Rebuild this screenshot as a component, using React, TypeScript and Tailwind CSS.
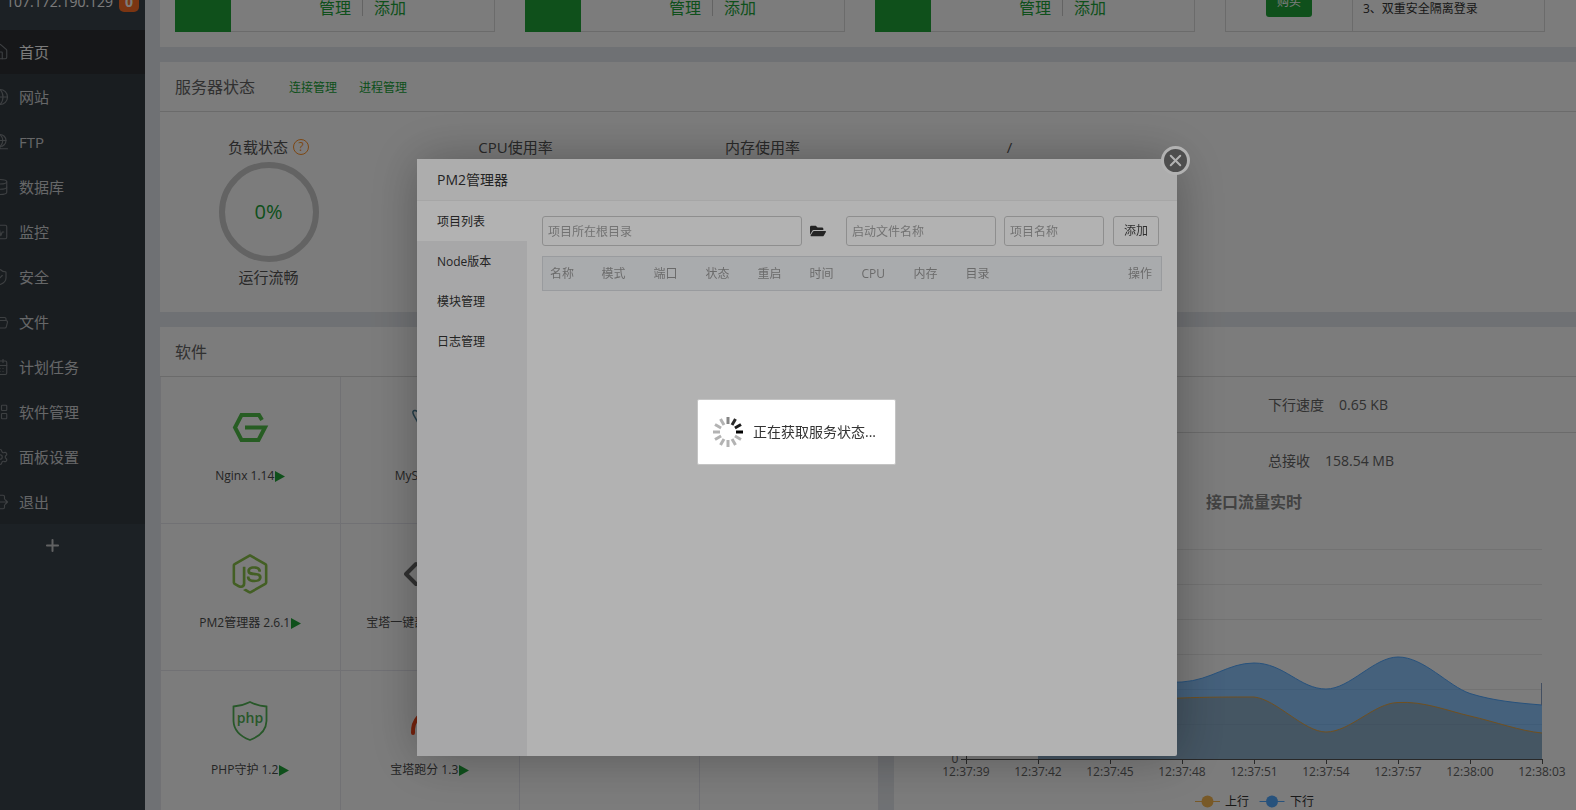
import React from "react";
import {
    CalendarDays,
    Database,
    FolderOpen,
    Globe,
    House,
    LayoutGrid,
    Plus,
    Settings,
    ShieldCheck,
    SquareActivity,
    X,
} from "lucide-react";
import { FaFolderOpen, FaNodeJs } from "react-icons/fa";

interface IconProps {
    size?: number;
    strokeWidth?: number;
    className?: string;
}

interface MenuItem {
    label: string;
    icon: React.ComponentType<IconProps>;
}

const FtpIcon: React.FC<IconProps> = ({ size = 18, strokeWidth = 1.5, className }) => (
    <svg viewBox="0 0 24 24" width={size} height={size} className={className} fill="none" stroke="currentColor" strokeWidth={strokeWidth} strokeLinecap="round">
        <circle cx="12" cy="10" r="8" />
        <path d="M12 2c-5 5-5 11 0 16M12 2c5 5 5 11 0 16M4 10h16M12 18v3M2 21h20" />
    </svg>
);

const ExitIcon: React.FC<IconProps> = ({ size = 18, strokeWidth = 1.5, className }) => (
    <svg viewBox="0 0 24 24" width={size} height={size} className={className} fill="none" stroke="currentColor" strokeWidth={strokeWidth} strokeLinecap="round" strokeLinejoin="round">
        <path d="M18 8V5a2 2 0 0 0-2-2H5a2 2 0 0 0-2 2v14a2 2 0 0 0 2 2h11a2 2 0 0 0 2-2v-3M10 12h12M19 9l3 3-3 3" />
    </svg>
);

const menu: MenuItem[] = [
    { label: "首页", icon: House },
    { label: "网站", icon: Globe },
    { label: "FTP", icon: FtpIcon },
    { label: "数据库", icon: Database },
    { label: "监控", icon: SquareActivity },
    { label: "安全", icon: ShieldCheck },
    { label: "文件", icon: FolderOpen },
    { label: "计划任务", icon: CalendarDays },
    { label: "软件管理", icon: LayoutGrid },
    { label: "面板设置", icon: Settings },
    { label: "退出", icon: ExitIcon },
];

const Sidebar: React.FC = () => (
    <aside className="w-[145px] shrink-0 overflow-hidden bg-[#3c454c]">
        <div className="flex h-[30px] items-end gap-[6px] overflow-hidden pb-[18px] pl-[6px] text-sm leading-5 text-white">
            <span>107.172.190.129</span>
            <span className="w-5 rounded-[5px] bg-[#fc6d26] text-center font-bold">0</span>
        </div>
        <nav className="flex flex-col gap-px bg-[#353d44]">
            {menu.map(({ label, icon: Icon }, idx) => (
                <a
                    key={label}
                    href="#"
                    className={
                        idx === 0
                            ? "flex h-11 items-center bg-[#2f3136] text-[15px] text-white"
                            : "flex h-11 items-center text-[15px] text-[#d2d4d6]"
                    }
                >
                    <Icon size={18} strokeWidth={1.5} className="-ml-[9px] mr-[10px] shrink-0 text-[#7f8488]" />
                    {label}
                </a>
            ))}
        </nav>
        <button type="button" aria-label="添加菜单" className="flex h-[42px] w-full items-center pl-[43px] text-[#c9cbcd]">
            <Plus size={19} strokeWidth={2.5} />
        </button>
    </aside>
);

const SiteBox: React.FC = () => (
    <div className="flex h-full border-b border-r border-[#ddd]">
        <div className="-mb-px w-14 bg-[#20a53a]" />
        <div className="flex flex-1 items-end justify-center gap-[11px] pb-[13px] text-base leading-5 text-[#20a53a]">
            <a href="#">管理</a>
            <span className="mb-[2px] h-4 w-px bg-[#ccc]" />
            <a href="#">添加</a>
        </div>
    </div>
);

const Overview: React.FC = () => (
    <section className="h-[47px] shrink-0 overflow-hidden bg-white pl-[15px] pr-[31px]">
        <div className="grid h-8 grid-cols-4 grid-rows-1 gap-[30px]">
            <SiteBox />
            <SiteBox />
            <SiteBox />
            <div className="flex h-full border border-t-0 border-[#ddd]">
                <div className="flex w-[127px] items-end justify-center border-r border-[#ddd] pb-[14px]">
                    <button type="button" className="h-[30px] w-[46px] rounded-[3px] bg-[#20a53a] text-xs text-white">
                        购买
                    </button>
                </div>
                <p className="self-end pb-3 pl-[10px] text-xs leading-5 text-[#333]">3、双重安全隔离登录</p>
            </div>
        </div>
    </section>
);

const ServerStatus: React.FC = () => (
    <section className="h-[250px] shrink-0 bg-white">
        <header className="flex h-[50px] items-center border-b border-[#ddd] pl-[15px]">
            <h2 className="text-base text-[#666]">服务器状态</h2>
            <a href="#" className="ml-[34px] pt-[2px] text-xs text-[#20a53a]">连接管理</a>
            <a href="#" className="ml-[22px] pt-[2px] text-xs text-[#20a53a]">进程管理</a>
        </header>
        <div className="-ml-[15px] flex pt-[25px] text-center text-[15px] leading-5 text-[#555]">
            <div className="flex w-[247px] flex-col items-center">
                <div className="flex items-center gap-[5px]">
                    负载状态
                    <a href="#" className="flex size-4 items-center justify-center rounded-full border border-[#ff9228] text-xs leading-4 text-[#ff9228]">?</a>
                </div>
                <div className="mt-[5px] flex size-[100px] items-center justify-center rounded-full border-[6px] border-[#ccc] text-xl text-[#20a53a]">
                    0%
                </div>
                <div className="mt-[5px]">运行流畅</div>
            </div>
            <div className="w-[247px]">CPU使用率</div>
            <div className="w-[247px]">内存使用率</div>
            <div className="w-[247px]">/</div>
        </div>
    </section>
);

const NginxIcon = () => (
    <svg viewBox="0 0 40 40" className="size-10" fill="none" stroke="#52c04a" strokeWidth="4">
        <path d="M32 13 29 8H11.5L5 20.500l6.500 12.500h17L35 20.500H15" />
    </svg>
);

const MysqlIcon = () => (
    <svg viewBox="0 0 40 40" className="size-10" fill="none" stroke="#4a7f96" strokeWidth="1.500">
        <path d="M8 16C6 11 2 7 3 4.500C4 3 6 3 9 6c7 1 14 8 17 16 2 4 6 6 9 8" />
    </svg>
);

const DeployIcon = () => (
    <svg viewBox="0 0 52 40" className="h-10 w-[52px]" fill="none" stroke="#666" strokeWidth="4" strokeLinecap="round" strokeLinejoin="round">
        <path d="M12 10 2 20l10 10M40 10l10 10-10 10M30 6l-8 28" />
    </svg>
);

const PhpIcon = () => (
    <svg viewBox="0 0 40 40" className="size-10">
        <path d="M20 1Q12 5 3.500 5.500V20Q4 33 20 39Q36 33 36.500 20V5.500Q28 5 20 1Z" fill="none" stroke="#53b557" strokeWidth="1.800" />
        <text x="20" y="22" textAnchor="middle" fontSize="14" fontWeight="600" fill="#53b557">php</text>
    </svg>
);

const ScoreIcon = () => (
    <svg viewBox="0 0 40 40" className="size-10" fill="none" stroke="#f2461a" strokeWidth="4" strokeLinecap="round">
        <path d="M3 32C2 4 38 4 37 32M20 28l7-9" />
    </svg>
);

interface Soft {
    name: string;
    icon: React.ReactNode;
}

const softs: (Soft | null)[] = [
    { name: "Nginx 1.14", icon: <NginxIcon /> },
    { name: "MySQL 5.6", icon: <MysqlIcon /> },
    null,
    null,
    { name: "PM2管理器 2.6.1", icon: <FaNodeJs className="size-10 text-[#8cc34b]" /> },
    { name: "宝塔一键部署源码 1.1", icon: <DeployIcon /> },
    null,
    null,
    { name: "PHP守护 1.2", icon: <PhpIcon /> },
    { name: "宝塔跑分 1.3", icon: <ScoreIcon /> },
    null,
    null,
];

const Software: React.FC = () => (
    <section className="min-w-0 flex-[719] bg-white">
        <header className="flex h-[50px] items-center border-b border-[#ddd] pl-[15px]">
            <h2 className="text-base text-[#666]">软件</h2>
        </header>
        <div className="grid grid-cols-4 border-l border-[#e8e8f0]">
            {softs.map((s, idx) => (
                <div key={idx} className="flex h-[147px] flex-col items-center border-b border-r border-[#e8e8f0] pt-[30px]">
                    {s && (
                        <>
                            {s.icon}
                            <div className="mt-[19px] flex items-center gap-px whitespace-nowrap text-xs leading-5 text-[#4d4d4d]">
                                {s.name}
                                <svg viewBox="0 0 10 11" className="h-[11px] w-[10px]" fill="#20a53a">
                                    <path d="M0 0 10 5.500 0 11Z" />
                                </svg>
                            </div>
                        </>
                    )}
                </div>
            ))}
        </div>
    </section>
);

const ticks = ["12:37:39", "12:37:42", "12:37:45", "12:37:48", "12:37:51", "12:37:54", "12:37:57", "12:38:00", "12:38:03"];
const gridLines = [60, 95, 130, 165, 200, 235];

const downLine = "M144 235C180 215 240 193 288 193C318 191 334 174 360 174C390 174 406 200 432 200C456 200 480 168 504 168C530 168 554 197 576 204.500C600 212 624 214 648 216";
const upLine = "M144 250C190 240 240 209 288 209C310 208 340 208 360 208C382 210 410 243 432 243C456 243 480 214 504 213.500C530 212 554 222 576 227C602 233 626 242 648 244";

const TrafficChart: React.FC = () => (
    <svg viewBox="0 0 682 321" className="block h-auto w-full" fontSize="12">
        <text x="360" y="19" textAnchor="middle" fontSize="16" fontWeight="bold" fill="#888">接口流量实时</text>
        {gridLines.map((y) => (
            <path key={y} d={`M72 ${y + 0.5}H648`} stroke="#ebebeb" />
        ))}
        <path d={`${upLine}V270H144Z`} fill="#ff8c00" fillOpacity="0.4" />
        <path d={`${downLine}V270H144Z`} fill="#1e90ff" fillOpacity="0.5" />
        <path d={downLine} fill="none" stroke="#52a9ff" />
        <path d={upLine} fill="none" stroke="#e5a543" />
        <path d="M647.500 194V216" stroke="#8aa4c8" />
        <path d="M67 270.500H648M72.500 60V275" stroke="#555" />
        <text x="61" y="274" textAnchor="middle" fill="#666">0</text>
        {ticks.map((t, idx) => (
            <g key={t}>
                <path d={`M${72.5 + idx * 72} 270V275`} stroke="#555" />
                <text x={72 + idx * 72} y="287" textAnchor="middle" fill="#666">{t}</text>
            </g>
        ))}
        <path d="M301 312.500H326" stroke="#f7b851" />
        <circle cx="313.500" cy="312.500" r="6" fill="#f7b851" />
        <text x="331" y="317" fill="#333">上行</text>
        <path d="M365.500 312.500H390.500" stroke="#52a9ff" />
        <circle cx="378" cy="312.500" r="6" fill="#52a9ff" />
        <text x="396" y="317" fill="#333">下行</text>
    </svg>
);

const Traffic: React.FC = () => (
    <section className="min-w-0 flex-[682] bg-white text-sm text-[#666]">
        <header className="h-[50px] border-b border-[#ddd]" />
        <dl className="flex h-14 items-center gap-[15px] border-b border-[#ddd] pl-[374px]">
            <dt>下行速度</dt>
            <dd>0.65 KB</dd>
        </dl>
        <dl className="flex h-14 items-center gap-[15px] pl-[374px]">
            <dt>总接收</dt>
            <dd>158.54 MB</dd>
        </dl>
        <TrafficChart />
    </section>
);

const tabs = ["项目列表", "Node版本", "模块管理", "日志管理"];
const columns = ["名称", "模式", "端口", "状态", "重启", "时间", "CPU", "内存", "目录"];

const fieldClass = "h-[30px] rounded-[3px] border border-[#ccc] px-[5px] text-xs text-[#333] placeholder:text-[#a5a5a5]";

const Pm2Dialog: React.FC = () => (
    <div role="dialog" aria-label="PM2管理器" className="relative flex h-[597px] w-[760px] flex-col rounded-[2px] bg-white shadow-[1px_1px_50px_rgba(0,0,0,0.3)]">
        <h2 className="h-[42px] border-b border-[#eee] bg-[#f8f8f8] pl-5 text-sm leading-[41px] text-[#333]">PM2管理器</h2>
        <button type="button" aria-label="关闭" className="absolute -right-[13px] -top-[13px] flex size-[29px] items-center justify-center rounded-full border-[3px] border-white bg-[#707070] text-white">
            <X size={19} strokeWidth={2.5} className="shrink-0" />
        </button>
        <div className="flex flex-1">
            <div className="flex w-[110px] flex-col bg-[#f0f0f1]">
                {tabs.map((t, idx) => (
                    <button
                        key={t}
                        type="button"
                        className={
                            idx === 0
                                ? "h-10 bg-white pl-5 pt-[2px] text-left text-xs text-[#333]"
                                : "h-10 pl-5 pt-[2px] text-left text-xs text-[#333]"
                        }
                    >
                        {t}
                    </button>
                ))}
            </div>
            <div className="flex-1 p-[15px]">
                <form className="flex items-center">
                    <input aria-label="项目所在根目录" placeholder="项目所在根目录" className={`${fieldClass} w-[260px]`} />
                    <button type="button" aria-label="选择目录" className="ml-2 w-9 text-[#333]">
                        <FaFolderOpen size={16} />
                    </button>
                    <input aria-label="启动文件名称" placeholder="启动文件名称" className={`${fieldClass} w-[150px]`} />
                    <input aria-label="项目名称" placeholder="项目名称" className={`${fieldClass} ml-2 w-[100px]`} />
                    <button type="button" className="ml-[9px] h-[30px] w-[46px] rounded-[3px] border border-[#ccc] text-xs text-[#444]">
                        添加
                    </button>
                </form>
                <table className="mt-[10px] w-full table-fixed border border-[#dbdee2] text-left text-xs text-[#999]">
                    <thead>
                        <tr className="h-[34px] bg-[#f3f5f8]">
                            {columns.map((c) => (
                                <th key={c} className="w-[52px] pl-[7px] font-normal">{c}</th>
                            ))}
                            <th className="pr-[9px] text-right font-normal">操作</th>
                        </tr>
                    </thead>
                </table>
            </div>
        </div>
    </div>
);

const spokes = [
    "#000", "#b3b3b3", "#b3b3b3", "#b3b3b3", "#b3b3b3", "#b3b3b3",
    "#b3b3b3", "#b3b3b3", "#b3b3b3", "#858585", "#2b2b2b", "#1a1a1a",
];

const Loading: React.FC = () => (
    <div role="status" className="flex h-[66px] w-[199px] items-center gap-[10px] rounded-[2px] border border-[#c4c4c4] bg-white pl-[15px] text-sm text-[#333]">
        <svg viewBox="-15 -15 30 30" className="size-[30px]" strokeWidth="3">
            {spokes.map((color, idx) => (
                <path key={idx} d="M8 0H15" stroke={color} transform={`rotate(${idx * 30})`} />
            ))}
        </svg>
        正在获取服务状态...
    </div>
);

const App: React.FC = () => (
    <div className="flex h-screen overflow-hidden bg-[#e6e9ee] font-['Open_Sans','Noto_Sans_CJK_SC',sans-serif]">
        <Sidebar />
        <main className="ml-[15px] flex min-w-0 flex-1 flex-col gap-[15px]">
            <Overview />
            <ServerStatus />
            <div className="flex shrink-0 gap-[15px]">
                <Software />
                <Traffic />
            </div>
        </main>
        <div className="fixed inset-0 z-10 bg-black/30" />
        <div className="fixed inset-0 z-20 flex items-start justify-center pl-[18px] pt-[159px]">
            <Pm2Dialog />
        </div>
        <div className="fixed inset-0 z-30 bg-black/30" />
        <div className="fixed inset-0 z-40 flex items-center justify-center pl-[17px] pt-[54px]">
            <Loading />
        </div>
    </div>
);

export default App;
